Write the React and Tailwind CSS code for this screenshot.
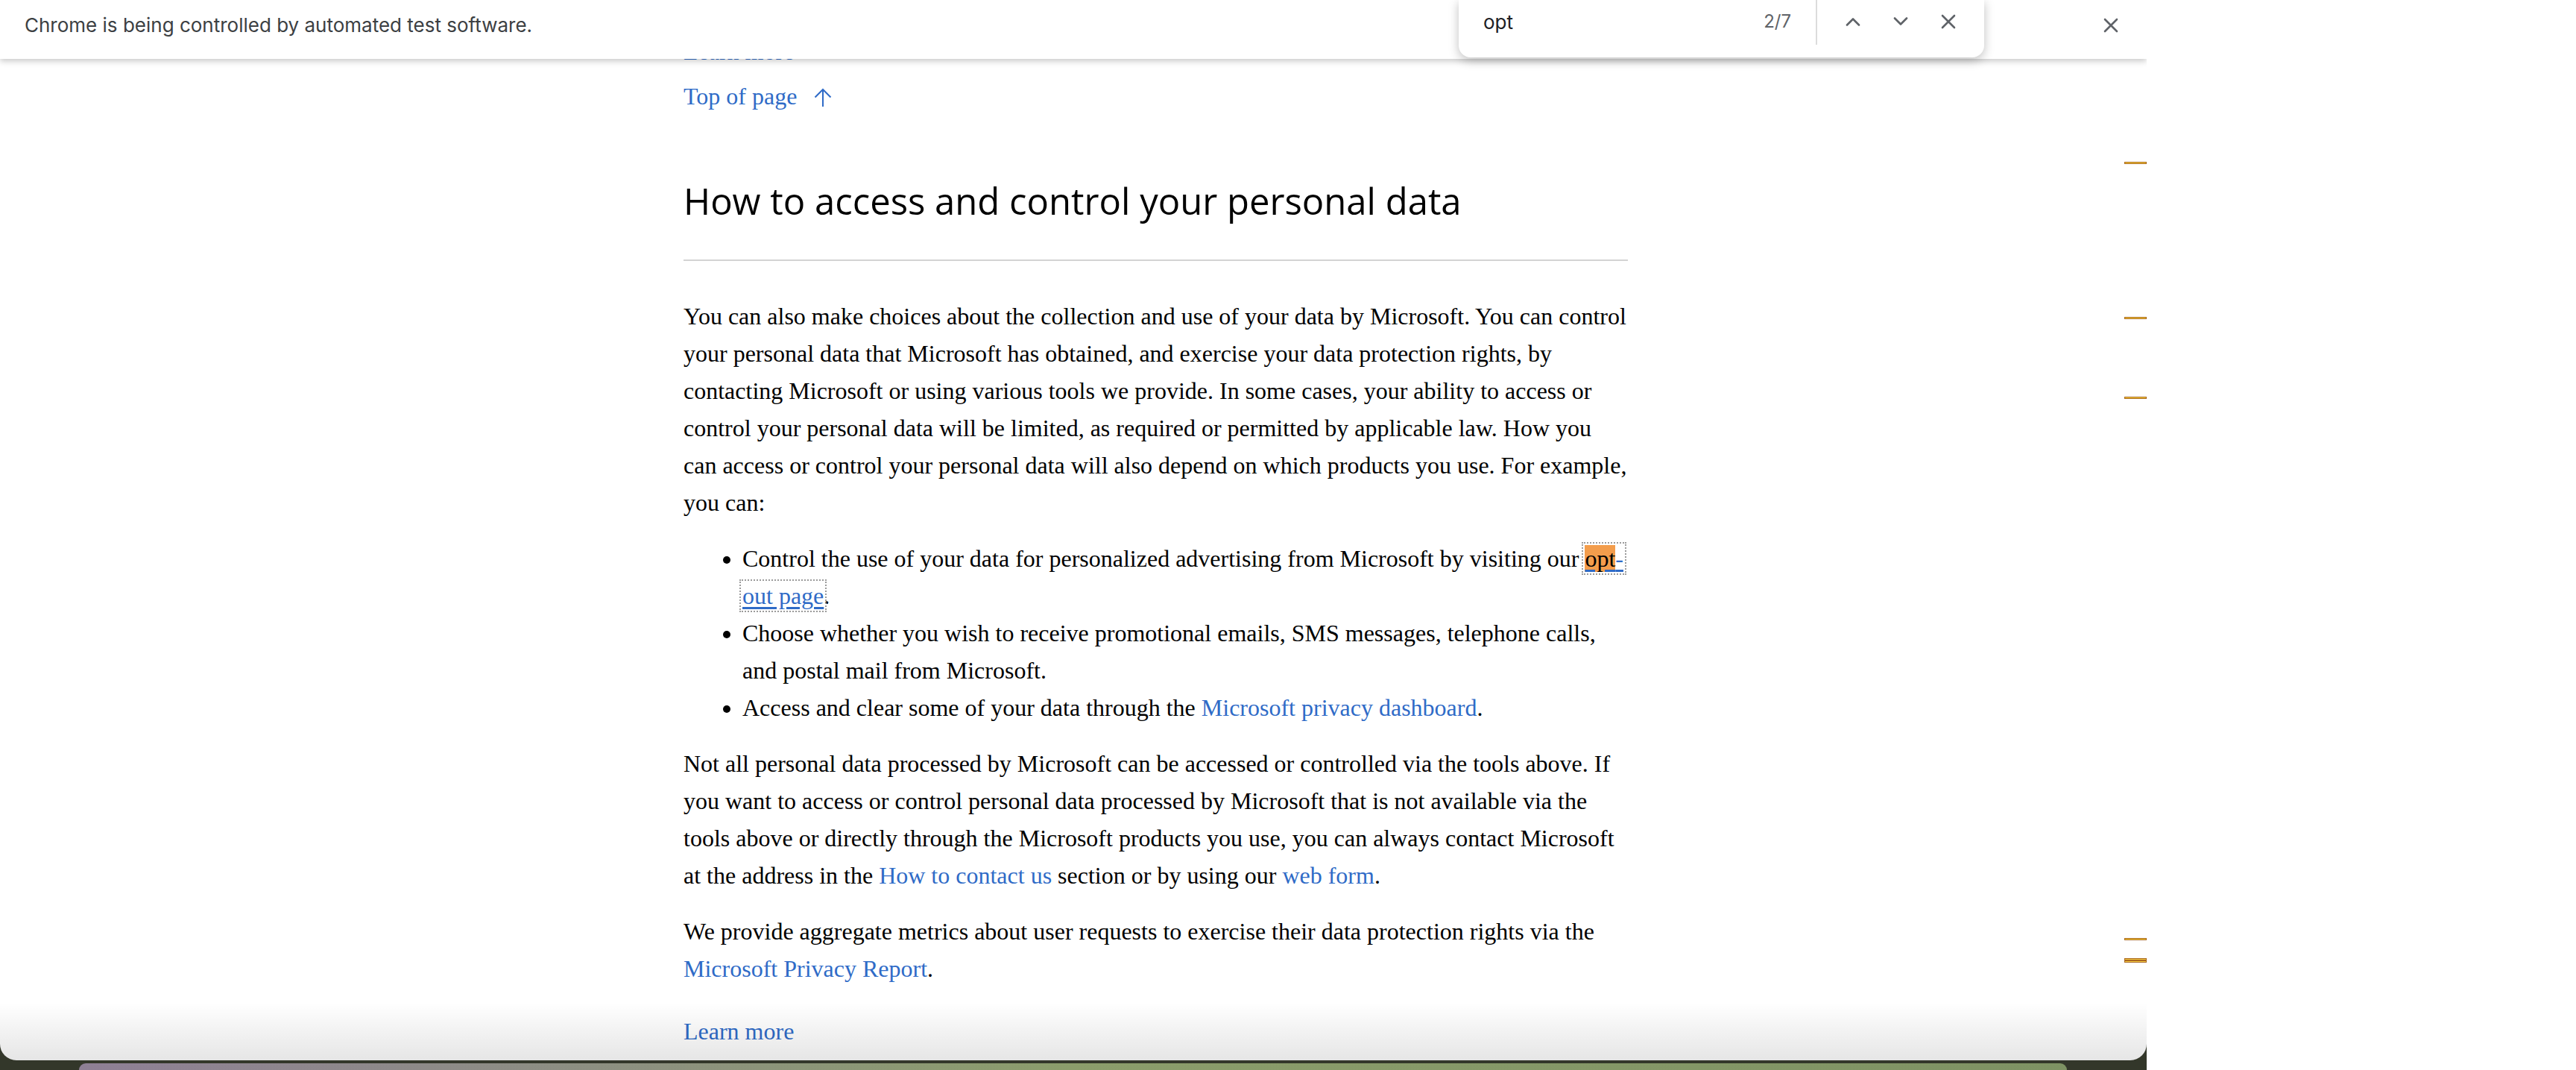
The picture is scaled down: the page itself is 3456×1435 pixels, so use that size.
import React from 'react';

const LINK = 'text-[#2f6bc7]';

// small chrome-style glyphs for the find bar and infobar
const Chevron = ({ up = false }) => (
  <svg width="20" height="12" viewBox="0 0 20 12" fill="none">
    <path
      d={up ? 'M2 10.5 L10 2.5 L18 10.5' : 'M2 1.5 L10 9.5 L18 1.5'}
      stroke="#5f6368"
      strokeWidth="2.6"
      strokeLinecap="round"
      strokeLinejoin="round"
    />
  </svg>
);

const Cross = () => (
  <svg width="20" height="20" viewBox="0 0 20 20" fill="none">
    <path d="M2 2 L18 18 M18 2 L2 18" stroke="#5f6368" strokeWidth="2.6" strokeLinecap="round" />
  </svg>
);

const ArrowUp = () => (
  <svg width="26" height="26" viewBox="0 0 26 26" fill="none" className="inline-block align-[-4px] ml-[22px]">
    <path d="M13 25 V2 M2.5 12.5 L13 2 L23.5 12.5" stroke="#2f6bc7" strokeWidth="2" />
  </svg>
);

// find-in-page tick marks on the scrollbar
const Tick = ({ top, active = false }) =>
  active ? (
    <div className="absolute right-0 w-[30px] h-[6px] bg-[#a8651d] flex flex-col justify-center gap-[2px] px-[1px]" style={{ top }}>
      <div className="h-[1px] bg-[#f7cf45]" />
      <div className="h-[1px] bg-[#f7cf45]" />
    </div>
  ) : (
    <div className="absolute right-0 w-[30px] h-[3px] bg-[#f7d13c] border border-[#a8651d]" style={{ top }} />
  );

const Outlined = ({ children }) => (
  <span className="outline-2 outline-dotted outline-[#9b9b9b] outline-offset-[2px]">{children}</span>
);

export default function App() {
  return (
    <div className="w-[3456px] h-[1435px] flex bg-white overflow-hidden">
      {/* browser window + desktop strip */}
      <div className="w-[2880px] h-full flex flex-col bg-[#33372a]">
        <div className="relative h-[1422px] bg-white rounded-b-[22px] overflow-hidden">
          {/* page content */}
          <div className="pt-[44px] pl-[917px] font-['Liberation_Serif',serif] text-[32px] leading-[50px] text-black whitespace-nowrap">
            <a className={`block ${LINK}`}>Learn more</a>
            <a className={`block mt-[10px] ${LINK}`}>
              Top of page
              <ArrowUp />
            </a>

            <h2 className="mt-[86px] font-['Open_Sans',sans-serif] text-[49px] leading-[58px] font-normal text-black">
              How to access and control your personal data
            </h2>
            <div className="mt-[50px] h-[2px] w-[1267px] bg-[#d3d3d3]" />

            <p className="mt-[49px]">
              You can also make choices about the collection and use of your data by Microsoft. You can control
              <br />
              your personal data that Microsoft has obtained, and exercise your data protection rights, by
              <br />
              contacting Microsoft or using various tools we provide. In some cases, your ability to access or
              <br />
              control your personal data will be limited, as required or permitted by applicable law. How you
              <br />
              can access or control your personal data will also depend on which products you use. For example,
              <br />
              you can:
            </p>

            <ul className="mt-[25px] pl-[79px] list-disc">
              <li>
                Control the use of your data for personalized advertising from Microsoft by visiting our{' '}
                <a className={`${LINK} underline decoration-[3px] underline-offset-[4px] decoration-[#2f6bc7]`}>
                  <Outlined>
                    <span className="bg-[#f39d4c] text-black">opt</span>-
                  </Outlined>
                  <br />
                  <Outlined>out page</Outlined>
                </a>
                .
              </li>
              <li>
                Choose whether you wish to receive promotional emails, SMS messages, telephone calls,
                <br />
                and postal mail from Microsoft.
              </li>
              <li>
                Access and clear some of your data through the <a className={LINK}>Microsoft privacy dashboard</a>.
              </li>
            </ul>

            <p className="mt-[25px]">
              Not all personal data processed by Microsoft can be accessed or controlled via the tools above. If
              <br />
              you want to access or control personal data processed by Microsoft that is not available via the
              <br />
              tools above or directly through the Microsoft products you use, you can always contact Microsoft
              <br />
              at the address in the <a className={LINK}>How to contact us</a> section or by using our{' '}
              <a className={LINK}>web form</a>.
            </p>

            <p className="mt-[25px]">
              We provide aggregate metrics about user requests to exercise their data protection rights via the
              <br />
              <a className={LINK}>Microsoft Privacy Report</a>.
            </p>

            <a className={`block mt-[34px] ${LINK}`}>Learn more</a>
          </div>

          {/* bottom fade */}
          <div className="absolute bottom-0 left-0 right-0 h-[78px] bg-linear-to-b from-black/0 to-black/10 pointer-events-none" />

          {/* scrollbar find ticks */}
          <Tick top={217} />
          <Tick top={425} />
          <Tick top={532} />
          <Tick top={1258} />
          <Tick top={1285} active />

          {/* automation infobar */}
          <div className="absolute top-0 left-0 right-0 h-[79px] bg-white shadow-[0_3px_8px_rgba(0,0,0,0.22)] flex items-center pl-[33px] pr-[38px] pb-[12px]">
            <span className="font-['Inter',sans-serif] text-[26px] text-[#3c4043]">
              Chrome is being controlled by automated test software.
            </span>
            <div className="ml-auto">
              <Cross />
            </div>
          </div>

          {/* find bar */}
          <div className="absolute top-0 left-[1957px] w-[705px] h-[77px] bg-white rounded-b-[16px] shadow-[0_4px_14px_rgba(0,0,0,0.25)] flex items-start font-['Inter',sans-serif]">
            <div className="flex-1 h-[58px] flex items-center pl-[33px] pr-[33px]">
              <span className="text-[26px] text-[#202124]">opt</span>
              <span className="ml-auto text-[24px] text-[#5f6368]">2/7</span>
            </div>
            <div className="w-[2px] h-[60px] bg-[#dcdcdc]" />
            <div className="h-[58px] flex items-center gap-[44px] pl-[38px] pr-[38px]">
              <Chevron up />
              <Chevron />
              <Cross />
            </div>
          </div>
        </div>

        {/* desktop behind the window */}
        <div className="h-[13px] pt-[4px] pl-[106px] pr-[107px]">
          <div className="h-full rounded-t-[14px] bg-linear-to-r from-[#8e7f95] via-[#8b9d6b] to-[#7e9263]" />
        </div>
      </div>

      {/* empty area right of the window */}
      <div className="flex-1 bg-white" />
    </div>
  );
}
